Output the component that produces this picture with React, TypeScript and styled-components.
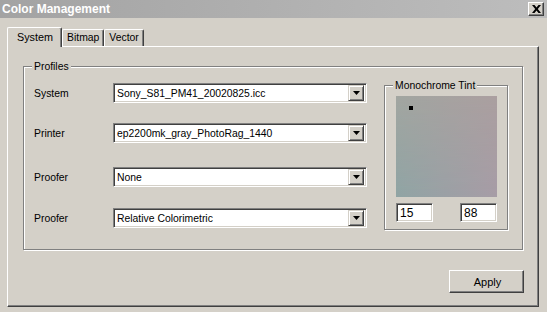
import * as React from 'react';
import styled, { createGlobalStyle } from 'styled-components';

const face = '#d4d0c8';
const font = '"Liberation Sans", Arial, sans-serif';

const GlobalStyle = createGlobalStyle`
    html, body {
        margin: 0;
        padding: 0;
        background: ${face};
    }
    * {
        box-sizing: border-box;
    }
`;

const Window = styled.div`
    width: 547px;
    height: 312px;
    overflow: hidden;
    background: ${face};
    font-family: ${font};
    font-size: 10.4px;
    color: #000;
`;

const TitleBar = styled.div`
    height: 18px;
    display: flex;
    align-items: center;
    justify-content: space-between;
    padding: 0 3px 0 2px;
    background: linear-gradient(to right, #a3a3a3, #bdbdbd);
`;

const TitleText = styled.span`
    color: #fff;
    font-weight: bold;
    font-size: 12px;
`;

const CloseButton = styled.div`
    width: 16px;
    height: 14px;
    display: flex;
    align-items: center;
    justify-content: center;
    background: ${face};
    border-top: 1px solid #fff;
    border-left: 1px solid #fff;
    border-right: 1px solid #404040;
    border-bottom: 1px solid #404040;
    box-shadow: inset -1px -1px 0 #808080;
`;

const Body = styled.div`
    padding: 9px 0 0 7px;
`;

const TabRow = styled.div`
    display: flex;
    align-items: flex-end;
    height: 19px;
    position: relative;
    z-index: 1;
`;

const Tab = styled.div<{ $active?: boolean }>`
    height: ${p => (p.$active ? '20px' : '17px')};
    padding: ${p => (p.$active ? '3px 8px 0 9px' : '2px 4px 0 4px')};
    margin-bottom: ${p => (p.$active ? '-1px' : '0')};
    display: flex;
    align-items: flex-start;
    background: ${face};
    border-top: 1px solid #fff;
    border-left: 1px solid #fff;
    border-right: 1px solid #404040;
    border-top-left-radius: 2px;
    border-top-right-radius: 2px;
    box-shadow: inset -1px 0 0 #808080;
    font-size: ${p => (p.$active ? '10.8px' : '10.4px')};
`;

const Panel = styled.div`
    width: 532px;
    height: 261px;
    padding: 19px 0 0 15px;
    border-top: 1px solid #fff;
    border-left: 1px solid #fff;
    border-right: 1px solid #404040;
    border-bottom: 1px solid #404040;
    box-shadow: inset -1px -1px 0 #808080;
`;

const Group = styled.div<{ $w: number; $h: number; $top?: number }>`
    position: relative;
    width: ${p => p.$w}px;
    height: ${p => p.$h}px;
    margin-top: ${p => p.$top ?? 0}px;
    border: 1px solid #808080;
    box-shadow: 1px 1px 0 #fff, inset 1px 1px 0 #fff;
`;

const GroupLabel = styled.span`
    position: absolute;
    top: -7px;
    left: 8px;
    padding: 0 2px;
    background: ${face};
    line-height: 13px;
`;

const ProfilesInner = styled.div`
    display: flex;
    align-items: flex-start;
    gap: 17px;
    padding: 16px 0 0 10px;
`;

const RowList = styled.div`
    display: flex;
    flex-direction: column;
`;

const Row = styled.div<{ $space: number }>`
    display: flex;
    align-items: center;
    height: 20px;
    margin-top: ${p => p.$space}px;
`;

const Label = styled.span`
    width: 79px;
`;

const Combo = styled.div`
    width: 254px;
    height: 20px;
    display: flex;
    align-items: center;
    background: #fff;
    border-top: 1px solid #808080;
    border-left: 1px solid #808080;
    border-right: 1px solid #fff;
    border-bottom: 1px solid #fff;
    box-shadow: inset 1px 1px 0 #404040, inset -1px -1px 0 ${face};
    padding: 0 2px 0 3px;
`;

const ComboText = styled.span`
    flex: 1;
    white-space: nowrap;
`;

const ArrowButton = styled.div`
    width: 16px;
    height: 16px;
    display: flex;
    align-items: center;
    justify-content: center;
    background: ${face};
    border-top: 1px solid ${face};
    border-left: 1px solid ${face};
    border-right: 1px solid #404040;
    border-bottom: 1px solid #404040;
    box-shadow: inset 1px 1px 0 #fff, inset -1px -1px 0 #808080;
`;

const TintInner = styled.div`
    padding: 10px 0 0 11px;
`;

const Swatch = styled.div`
    position: relative;
    width: 101px;
    height: 101px;
    background: linear-gradient(to right, #a2a6a1, #ab9fa0);
`;

const SwatchShade = styled.div`
    position: absolute;
    inset: 0;
    background: linear-gradient(to right, #8fa4a4, #a79ca6);
    mask-image: linear-gradient(to bottom, transparent, #000);
    -webkit-mask-image: linear-gradient(to bottom, transparent, #000);
`;

const Dot = styled.div`
    position: absolute;
    left: 13px;
    top: 10px;
    width: 4px;
    height: 4px;
    background: #000;
`;

const InputRow = styled.div`
    display: flex;
    justify-content: space-between;
    width: 101px;
    margin-top: 6px;
`;

const NumberBox = styled.div`
    width: 37px;
    height: 19px;
    display: flex;
    align-items: center;
    padding-left: 3px;
    font-size: 12px;
    background: #fff;
    border-top: 1px solid #808080;
    border-left: 1px solid #808080;
    border-right: 1px solid #fff;
    border-bottom: 1px solid #fff;
    box-shadow: inset 1px 1px 0 #404040, inset -1px -1px 0 ${face};
`;

const Footer = styled.div`
    width: 501px;
    display: flex;
    justify-content: flex-end;
    margin-top: 20px;
`;

const Button = styled.div`
    width: 75px;
    height: 23px;
    display: flex;
    align-items: center;
    justify-content: center;
    font-size: 11px;
    padding-left: 2px;
    background: ${face};
    border-top: 1px solid #fff;
    border-left: 1px solid #fff;
    border-right: 1px solid #404040;
    border-bottom: 1px solid #404040;
    box-shadow: inset -1px -1px 0 #808080;
`;

const DownArrow = () => (
    <svg width="7" height="4" viewBox="0 0 7 4">
        <path d="M0 0h7L3.5 4z" fill="#000" />
    </svg>
);

const CloseGlyph = () => (
    <svg width="9" height="8" viewBox="0 0 9 8">
        <path d="M0 0h2.5L4.5 2.6 6.5 0H9L5.8 4 9 8H6.5L4.5 5.4 2.5 8H0l3.2-4z" fill="#000" />
    </svg>
);

const rows = [
    { label: 'System', value: 'Sony_S81_PM41_20020825.icc', space: 0 },
    { label: 'Printer', value: 'ep2200mk_gray_PhotoRag_1440', space: 20 },
    { label: 'Proofer', value: 'None', space: 24 },
    { label: 'Proofer', value: 'Relative Colorimetric', space: 21 },
];

export default function App() {
    return (
        <Window>
            <GlobalStyle />
            <TitleBar>
                <TitleText>Color Management</TitleText>
                <CloseButton>
                    <CloseGlyph />
                </CloseButton>
            </TitleBar>
            <Body>
                <TabRow>
                    <Tab $active>System</Tab>
                    <Tab>Bitmap</Tab>
                    <Tab>Vector</Tab>
                </TabRow>
                <Panel>
                    <Group $w={500} $h={184}>
                        <GroupLabel>Profiles</GroupLabel>
                        <ProfilesInner>
                            <RowList>
                                {rows.map((r, i) => (
                                    <Row key={i} $space={r.space}>
                                        <Label>{r.label}</Label>
                                        <Combo>
                                            <ComboText>{r.value}</ComboText>
                                            <ArrowButton>
                                                <DownArrow />
                                            </ArrowButton>
                                        </Combo>
                                    </Row>
                                ))}
                            </RowList>
                            <Group $w={124} $h={145} $top={2}>
                                <GroupLabel>Monochrome Tint</GroupLabel>
                                <TintInner>
                                    <Swatch>
                                        <SwatchShade />
                                        <Dot />
                                    </Swatch>
                                    <InputRow>
                                        <NumberBox>15</NumberBox>
                                        <NumberBox>88</NumberBox>
                                    </InputRow>
                                </TintInner>
                            </Group>
                        </ProfilesInner>
                    </Group>
                    <Footer>
                        <Button>Apply</Button>
                    </Footer>
                </Panel>
            </Body>
        </Window>
    );
}
